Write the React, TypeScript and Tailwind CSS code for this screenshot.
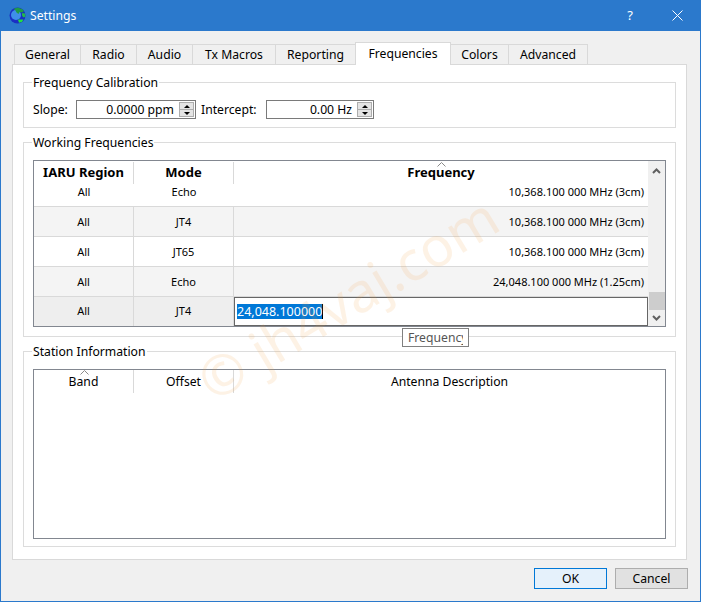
import type { ReactNode } from 'react';

const tabs = [
  { label: 'General', w: 'w-[67px]' },
  { label: 'Radio', w: 'w-[57px]' },
  { label: 'Audio', w: 'w-[57px]' },
  { label: 'Tx Macros', w: 'w-[84px]' },
  { label: 'Reporting', w: 'w-[81px]' },
  { label: 'Frequencies', w: 'w-[96px]', active: true },
  { label: 'Colors', w: 'w-[59px]' },
  { label: 'Advanced', w: 'w-[80px]' },
];

const rows = [
  { mode: 'JT4', freq: '10,368.100 000 MHz (3cm)', shade: true },
  { mode: 'JT65', freq: '10,368.100 000 MHz (3cm)' },
  { mode: 'Echo', freq: '24,048.100 000 MHz (1.25cm)', shade: true },
];

function Globe() {
  return (
    <svg width="17" height="17" viewBox="0 0 17 17" className="shrink-0">
      <circle cx="8.5" cy="8.5" r="8" fill="#1a2fc4" />
      <circle cx="7" cy="8" r="5" fill="#3f8fe8" />
      <path d="M4.500 1.800 9 .6l4.500 1.600 1.500 2-2 1.200-2.500-.4-1 2-2-1.500-1-2z" fill="#1f9a4a" />
      <path d="M13 6l3 .5.500 3-2 1-1.500-2z" fill="#23b84c" />
      <path d="M9 12.500h5.500l-1.500 2.500-3 .8z" fill="#22e040" />
    </svg>
  );
}

function Group({ title, className, children }: { title: string; className: string; children: ReactNode }) {
  return (
    <fieldset className={`border border-[#dcdcdc] px-[9px] ${className}`}>
      <legend className="-ml-[1px] px-[1px] pt-[2px] leading-[16px]">{title}</legend>
      {children}
    </fieldset>
  );
}

function SpinBox({ value, className }: { value: string; className: string }) {
  return (
    <div className={`flex h-[19px] items-center justify-end border border-[#7a7a7a] bg-white pr-[1px] ${className}`}>
      <span className="pr-[5px] pt-[1px]">{value}</span>
      <div className="flex h-[15px] w-[15px] flex-col border border-[#adadad] bg-[#e4e4e4]">
        <div className="flex flex-1 items-center justify-center border-b border-[#adadad]">
          <div className="h-0 w-0 border-x-[3px] border-b-[3px] border-x-transparent border-b-black" />
        </div>
        <div className="flex flex-1 items-center justify-center">
          <div className="h-0 w-0 border-x-[3px] border-t-[3px] border-x-transparent border-t-black" />
        </div>
      </div>
    </div>
  );
}

function SortArrow() {
  return (
    <svg width="9" height="5" viewBox="0 0 9 5" className="absolute top-0 left-1/2 -ml-[4px]">
      <path d="M.5 4.500 4.500.5l4 4" fill="none" stroke="#8a8a8a" />
    </svg>
  );
}

function Chevron({ down }: { down?: boolean }) {
  return (
    <svg width="9" height="6" viewBox="0 0 9 6">
      <path d={down ? 'M1 1l3.500 3.500L8 1' : 'M1 5l3.500-3.500L8 5'} fill="none" stroke="#606060" strokeWidth="2" />
    </svg>
  );
}

function Row({ mode, freq, shade }: { mode: string; freq: string; shade?: boolean }) {
  return (
    <div className={`flex h-[30px] items-center border-b border-[#d9d9d9] text-[11px] ${shade ? 'bg-[#f4f4f4]' : 'bg-white'}`}>
      <div className="flex h-full w-[100px] items-center justify-center border-r border-[#d9d9d9] pt-[1px]">All</div>
      <div className="flex h-full w-[100px] items-center justify-center border-r border-[#d9d9d9] pt-[1px]">{mode}</div>
      <div className="flex-1 pr-[4px] pt-[1px] text-right">{freq}</div>
    </div>
  );
}

export default function App() {
  return (
    <div
      className="relative flex h-[602px] w-[701px] flex-col overflow-hidden border-x border-b border-[#2b79cc] bg-[#f0f0f0] text-[12.2px] text-black"
      style={{ fontFamily: '"Noto Sans", "Open Sans", sans-serif' }}
    >
      <div className="flex h-[31px] shrink-0 items-center bg-[#2b79cc] pl-[8px] text-white">
        <Globe />
        <span className="ml-[4px] pt-[2px]">Settings</span>
        <span className="ml-auto mr-[39px] text-[13px]">?</span>
        <svg width="11" height="11" viewBox="0 0 11 11" className="mr-[17px]">
          <path d="M.5.5l10 10M10.500.5l-10 10" stroke="white" strokeWidth="1" />
        </svg>
      </div>

      <div className="flex flex-1 flex-col px-[11px] pt-[11px]">
        <div className="z-10 -mb-[1px] flex h-[23px] items-end pl-[2px]">
          {tabs.map((t) => (
            <div
              key={t.label}
              className={
                t.active
                  ? `-mr-[1px] flex h-[23px] items-center justify-center border border-b-0 border-[#d9d9d9] bg-white ${t.w}`
                  : `-mr-[1px] flex h-[21px] items-center justify-center border border-[#d9d9d9] bg-[#f0f0f0] pt-[2px] ${t.w}`
              }
            >
              {t.label}
            </div>
          ))}
        </div>

        <div className="flex h-[496px] w-[675px] flex-col gap-[5px] border border-[#d9d9d9] bg-white pl-[10px] pr-[10px] pt-[8px]">
          <Group title="Frequency Calibration" className="h-[55px]">
            <div className="mt-[9px] flex items-center">
              <span className="w-[43px] pt-[1px]">Slope:</span>
              <SpinBox value="0.0000 ppm" className="w-[120px]" />
              <span className="ml-[5px] w-[65px] pt-[1px]">Intercept:</span>
              <SpinBox value="0.00 Hz" className="w-[108px]" />
            </div>
          </Group>

          <Group title="Working Frequencies" className="h-[204px]">
            <div className="mt-[9px] flex h-[167px] border border-[#828790]">
              <div className="flex w-[614px] flex-col">
                <div className="flex h-[23px] items-center pt-[1px] text-[13px] font-bold">
                  <div className="flex h-full w-[100px] items-center justify-center border-r border-[#d9d9d9]">IARU Region</div>
                  <div className="flex h-full w-[100px] items-center justify-center border-r border-[#d9d9d9]">Mode</div>
                  <div className="relative flex h-full flex-1 items-center justify-center">
                    <SortArrow />
                    Frequency
                  </div>
                </div>
                <div className="flex h-[23px] items-end border-b border-[#d9d9d9] pb-[7px] text-[11px] leading-[16px]">
                  <div className="h-[15px] w-[100px] text-center">All</div>
                  <div className="h-[15px] w-[100px] text-center">Echo</div>
                  <div className="h-[15px] flex-1 pr-[4px] text-right">10,368.100 000 MHz (3cm)</div>
                </div>
                {rows.map((r) => (
                  <Row key={r.freq + r.mode} {...r} />
                ))}
                <div className="flex flex-1 items-center text-[11px]">
                  <div className="flex h-full w-[100px] items-center justify-center border-r border-[#d9d9d9] bg-[#eeeeee]">All</div>
                  <div className="flex h-full w-[100px] items-center justify-center border-r border-[#d9d9d9] bg-[#eeeeee]">JT4</div>
                  <div className="flex h-full flex-1 items-center border border-[#666666] bg-white pl-[2px] text-[12.5px]">
                    <span className="border-r border-black bg-[#0078d7] leading-[15px] text-white">24,048.100000</span>
                  </div>
                </div>
              </div>
              <div className="flex flex-1 flex-col items-center bg-[#f0f0f0]">
                <div className="flex h-[17px] items-center pt-[2px]"><Chevron /></div>
                <div className="flex-1" />
                <div className="h-[18px] w-[16px] bg-[#cdcdcd]" />
                <div className="flex h-[16px] items-center"><Chevron down /></div>
              </div>
            </div>
          </Group>

          <Group title="Station Information" className="h-[205px]">
            <div className="mt-[9px] h-[170px] border border-[#828790]">
              <div className="flex h-[23px] items-center">
                <div className="relative flex h-full w-[100px] items-center justify-center border-r border-[#d9d9d9] pt-[2px]">
                  <SortArrow />
                  Band
                </div>
                <div className="flex h-full w-[100px] items-center justify-center border-r border-[#d9d9d9] pt-[2px]">Offset</div>
                <div className="flex h-full flex-1 items-center justify-center pt-[2px]">Antenna Description</div>
              </div>
            </div>
          </Group>
        </div>

        <div className="mt-[8px] flex justify-end gap-[8px] pr-[1px]">
          <button className="h-[21px] w-[73px] border border-[#0078d7] bg-[#e5f1fb] pt-[1px]">OK</button>
          <button className="h-[21px] w-[73px] border border-[#adadad] bg-[#e1e1e1] pt-[1px]">Cancel</button>
        </div>
      </div>

      <div className="absolute left-[401px] top-[328px] flex h-[19px] w-[67px] items-center overflow-hidden border border-[#808080] bg-white pl-[5px] pt-[1px] text-[#555555]">
        <span className="w-[55px] overflow-hidden whitespace-nowrap">Frequency</span>
      </div>

      <div className="pointer-events-none absolute left-[177px] top-[270px] -rotate-[31deg] whitespace-nowrap text-[55px] leading-none text-[#f5a040] opacity-[0.13]">
        © jh4vaj.com
      </div>
    </div>
  );
}
